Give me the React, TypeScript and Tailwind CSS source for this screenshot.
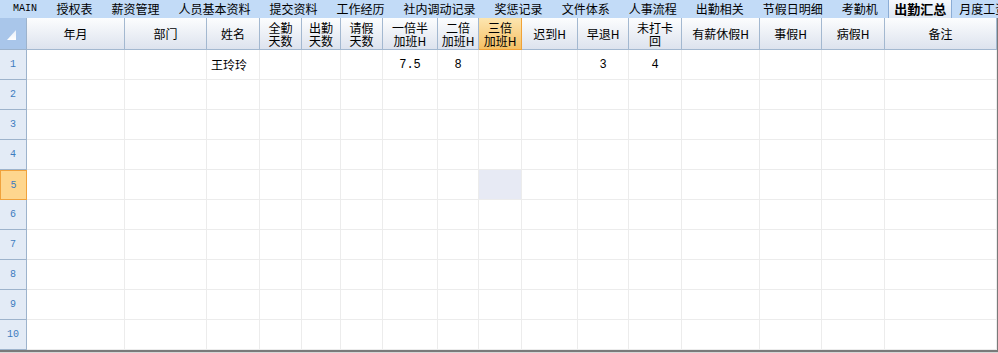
const cjk = { fontFamily: '"Noto Sans CJK SC", "Noto Sans", sans-serif' }
const mono = { fontFamily: '"Liberation Mono", "DejaVu Sans Mono", monospace' }

const tabs = ['授权表', '薪资管理', '人员基本资料', '提交资料', '工作经历', '社内调动记录', '奖惩记录', '文件体系', '人事流程', '出勤相关', '节假日明细', '考勤机']

const columns = ['年月', '部门', '姓名', '全勤\n天数', '出勤\n天数', '请假\n天数', '一倍半\n加班H', '二倍\n加班H', '三倍\n加班H', '迟到H', '早退H', '未打卡\n回', '有薪休假H', '事假H', '病假H', '备注']

// row 1 values, index matches columns
const firstRow: Record<number, string> = { 2: '王玲玲', 6: '7.5', 7: '8', 10: '3', 11: '4' }

const gridCols = 'grid grid-cols-[27px_98px_82px_53px_42px_39px_42px_55px_41px_43px_56px_51px_53px_78px_62px_63px_112px]'

function TabBar() {
  return (
    <div className="flex h-[18px] items-stretch overflow-hidden bg-[#c2dbf7] pl-[3px] text-[12px] leading-[18px] text-black" style={cjk}>
      <div className="px-[10px] text-[10px]" style={mono}>MAIN</div>
      {tabs.map((t) => (
        <div key={t} className="whitespace-nowrap px-[9.5px]">{t}</div>
      ))}
      <div className="ml-[1px] whitespace-nowrap border-x border-[#8badd6] bg-gradient-to-b from-[#f6f9fd] to-[#dfe8f4] px-[5px] text-[13px] font-bold">
        出勤汇总
      </div>
      <div className="whitespace-nowrap pl-[7px]">月度工资</div>
    </div>
  )
}

function HeaderRow() {
  return (
    <div className={`${gridCols} h-[32px]`}>
      <div className="relative border-r border-b border-[#9db3cc] bg-[#a9c6ea]">
        <svg className="absolute right-[10px] bottom-[9px]" width="9" height="10" viewBox="0 0 9 10">
          <defs>
            <linearGradient id="tri" x1="0" y1="0" x2="0" y2="1">
              <stop offset="0" stopColor="#e6eef8" />
              <stop offset="1" stopColor="#ffffff" />
            </linearGradient>
          </defs>
          <polygon points="9,0 9,10 0,10" fill="url(#tri)" />
        </svg>
      </div>
      {columns.map((c, i) => (
        <div
          key={c}
          className={
            i === 8
              ? 'flex items-center justify-center whitespace-pre-line border-r border-b border-[#f0a238] bg-gradient-to-b from-[#fde6b0] to-[#f5c063] text-center text-[12px] leading-[13px] text-black'
              : 'flex items-center justify-center whitespace-pre-line border-r border-b border-[#a3b8d0] bg-gradient-to-b from-[#fcfdfe] to-[#dde3ee] text-center text-[12px] leading-[13px] text-black'
          }
          style={cjk}
        >
          {c}
        </div>
      ))}
    </div>
  )
}

function BodyRow({ n }: { n: number }) {
  const active = n === 5
  return (
    <div className={`${gridCols} h-[30px]`}>
      <div
        className={
          active
            ? 'flex items-center justify-center border border-[#f0a23c] bg-[#fed68e] text-[10px] text-[#3d7cc0]'
            : 'flex items-center justify-center border-r border-b border-[#9db3cc] bg-[#e3ebf6] text-[10px] text-[#3d7cc0]'
        }
        style={mono}
      >
        {n}
      </div>
      {columns.map((c, i) => {
        const val = n === 1 ? firstRow[i] : undefined
        const isName = i === 2
        return (
          <div
            key={c}
            className={`flex items-center border-r border-b border-[#ececec] text-[12px] text-black ${
              isName ? 'justify-start pl-[4px]' : 'justify-center'
            } ${active && i === 8 ? 'bg-[#e7eaf4]' : 'bg-white'}`}
            style={isName ? cjk : mono}
          >
            {val}
          </div>
        )
      })}
    </div>
  )
}

export default function App() {
  return (
    <div className="h-[353px] w-[998px] overflow-hidden bg-[#d6d6d6]">
      <TabBar />
      <div className="w-[998px] border-r border-b-2 border-[#7a7a7a]">
        <HeaderRow />
        {Array.from({ length: 10 }, (_, i) => (
          <BodyRow key={i} n={i + 1} />
        ))}
      </div>
    </div>
  )
}
